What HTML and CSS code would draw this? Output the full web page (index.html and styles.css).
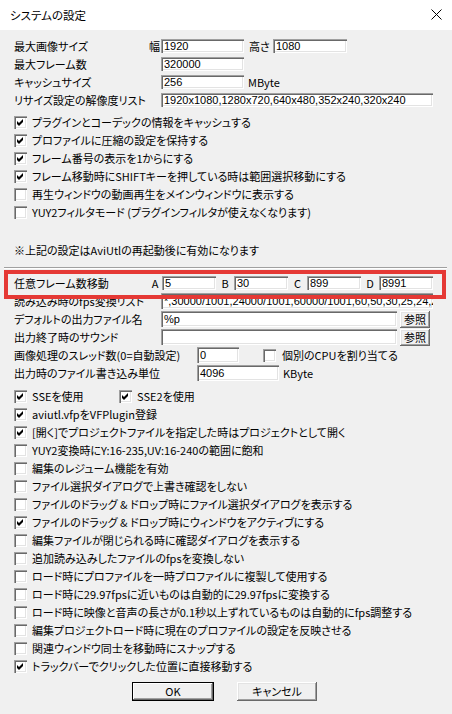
FILE: index.html
```html
<!DOCTYPE html>
<html lang="ja">
<head>
<meta charset="utf-8">
<title>システムの設定</title>
<link rel="stylesheet" href="styles.css">
</head>
<body>
<div class="window">
  <div class="titlebar">
    <span class="title">システムの設定</span>
    <svg class="close" width="11" height="11" viewBox="0 0 11 11"><path d="M0.5 0.5 L10.5 10.5 M10.5 0.5 L0.5 10.5" stroke="#000" stroke-width="1" fill="none"/></svg>
  </div>
  <div class="content">
    <div class="top">
      <div class="row"><span class="lbl l147 split">最大画像サイズ<span>幅</span></span><span class="edit e83">1920</span><span class="mid">高さ</span><span class="edit e74">1080</span></div>
      <div class="row"><span class="lbl l147">最大フレーム数</span><span class="edit e83">320000</span></div>
      <div class="row"><span class="lbl l147">キャッシュサイズ</span><span class="edit e83">256</span><span class="unit">MByte</span></div>
      <div class="row"><span class="lbl l147">リサイズ設定の解像度リスト</span><span class="edit e272">1920x1080,1280x720,640x480,352x240,320x240</span></div>
    </div>
    <div class="checks">
      <div class="row"><span class="box"><svg width="13" height="13" viewBox="0 0 13 13"><polygon points="3,5 5,7 9,3 9,6 5,10 3,8" fill="#000"/></svg></span><span>プラグインとコーデックの情報をキャッシュする</span></div>
      <div class="row"><span class="box"><svg width="13" height="13" viewBox="0 0 13 13"><polygon points="3,5 5,7 9,3 9,6 5,10 3,8" fill="#000"/></svg></span><span>プロファイルに圧縮の設定を保持する</span></div>
      <div class="row"><span class="box"><svg width="13" height="13" viewBox="0 0 13 13"><polygon points="3,5 5,7 9,3 9,6 5,10 3,8" fill="#000"/></svg></span><span>フレーム番号の表示を1からにする</span></div>
      <div class="row"><span class="box"><svg width="13" height="13" viewBox="0 0 13 13"><polygon points="3,5 5,7 9,3 9,6 5,10 3,8" fill="#000"/></svg></span><span>フレーム移動時にSHIFTキーを押している時は範囲選択移動にする</span></div>
      <div class="row"><span class="box"></span><span>再生ウィンドウの動画再生をメインウィンドウに表示する</span></div>
      <div class="row"><span class="box"></span><span>YUY2フィルタモード (プラグインフィルタが使えなくなります)</span></div>
    </div>
    <div class="row note">※上記の設定はAviUtlの再起動後に有効になります</div>
    <div class="separator"></div>
    <div class="lower">
      <div class="row"><span class="lbl l134">任意フレーム数移動</span><span class="key k14">A</span><span class="edit e54">5</span><span class="key k18">B</span><span class="edit e54">30</span><span class="key k19">C</span><span class="edit e54">899</span><span class="key k18">D</span><span class="edit e54">8991</span></div>
      <div class="row"><span class="lbl l147">読み込み時のfps変換リスト</span><span class="edit tall e272">*,30000/1001,24000/1001,60000/1001,60,50,30,25,24,20,15,12,10,8,6,5,4,3,2,1</span></div>
      <div class="row"><span class="lbl l147">デフォルトの出力ファイル名</span><span class="edit tall e236">%p</span><span class="btn ref">参照</span></div>
      <div class="row"><span class="lbl l147">出力終了時のサウンド</span><span class="edit tall e236"></span><span class="btn ref">参照</span></div>
      <div class="row"><span class="lbl l183">画像処理のスレッド数(0=自動設定)</span><span class="edit tall e42">0</span><span class="box cpu"></span><span>個別のCPUを割り当てる</span></div>
      <div class="row"><span class="lbl l183">出力時のファイル書き込み単位</span><span class="edit tall e82">4096</span><span class="unit">KByte</span></div>
    </div>
    <div class="checks2">
      <div class="row"><span class="group"><span class="box"><svg width="13" height="13" viewBox="0 0 13 13"><polygon points="3,5 5,7 9,3 9,6 5,10 3,8" fill="#000"/></svg></span><span>SSEを使用</span></span><span class="box"><svg width="13" height="13" viewBox="0 0 13 13"><polygon points="3,5 5,7 9,3 9,6 5,10 3,8" fill="#000"/></svg></span><span>SSE2を使用</span></div>
      <div class="row"><span class="box"><svg width="13" height="13" viewBox="0 0 13 13"><polygon points="3,5 5,7 9,3 9,6 5,10 3,8" fill="#000"/></svg></span><span>aviutl.vfpをVFPlugin登録</span></div>
      <div class="row"><span class="box"><svg width="13" height="13" viewBox="0 0 13 13"><polygon points="3,5 5,7 9,3 9,6 5,10 3,8" fill="#000"/></svg></span><span>[開く]でプロジェクトファイルを指定した時はプロジェクトとして開く</span></div>
      <div class="row"><span class="box"></span><span>YUY2変換時にY:16-235,UV:16-240の範囲に飽和</span></div>
      <div class="row"><span class="box"></span><span>編集のレジューム機能を有効</span></div>
      <div class="row"><span class="box"></span><span>ファイル選択ダイアログで上書き確認をしない</span></div>
      <div class="row"><span class="box"></span><span>ファイルのドラッグ &amp; ドロップ時にファイル選択ダイアログを表示する</span></div>
      <div class="row"><span class="box"><svg width="13" height="13" viewBox="0 0 13 13"><polygon points="3,5 5,7 9,3 9,6 5,10 3,8" fill="#000"/></svg></span><span>ファイルのドラッグ &amp; ドロップ時にウィンドウをアクティブにする</span></div>
      <div class="row"><span class="box"></span><span>編集ファイルが閉じられる時に確認ダイアログを表示する</span></div>
      <div class="row"><span class="box"></span><span>追加読み込みしたファイルのfpsを変換しない</span></div>
      <div class="row"><span class="box"></span><span>ロード時にプロファイルを一時プロファイルに複製して使用する</span></div>
      <div class="row"><span class="box"></span><span>ロード時に29.97fpsに近いものは自動的に29.97fpsに変換する</span></div>
      <div class="row"><span class="box"></span><span>ロード時に映像と音声の長さが0.1秒以上ずれているものは自動的にfps調整する</span></div>
      <div class="row"><span class="box"></span><span>編集プロジェクトロード時に現在のプロファイルの設定を反映させる</span></div>
      <div class="row"><span class="box"></span><span>関連ウィンドウ同士を移動時にスナップする</span></div>
      <div class="row"><span class="box"><svg width="13" height="13" viewBox="0 0 13 13"><polygon points="3,5 5,7 9,3 9,6 5,10 3,8" fill="#000"/></svg></span><span>トラックバーでクリックした位置に直接移動する</span></div>
    </div>
    <div class="buttons">
      <span class="btn ok">OK</span>
      <span class="btn cancel">キャンセル</span>
    </div>
  </div>
  <div class="highlight"></div>
</div>
</body>
</html>
```
FILE: styles.css
```css
html, body {
  margin: 0;
  padding: 0;
}
body {
  width: 452px;
  height: 714px;
  overflow: hidden;
  background: #f0f0f0;
  font-family: "Noto Sans CJK JP", sans-serif;
  font-size: 11px;
  font-feature-settings: "palt";
  color: #000;
}
.window {
  position: relative;
  width: 452px;
  height: 714px;
}
.titlebar {
  height: 30px;
  background: #fff;
  display: flex;
  align-items: center;
  justify-content: space-between;
  padding: 0 10px 0 10px;
  box-sizing: border-box;
}
.title {
  line-height: 30px;
  font-size: 11.5px;
}
.close {
  display: block;
  margin-top: -1px;
}
.content {
  padding: 0 0 0 14px;
}
.row {
  display: flex;
  align-items: center;
  height: 18px;
  line-height: 18px;
  white-space: nowrap;
}
.top {
  padding-top: 7px;
}
.checks {
  margin-top: 4px;
}
.lbl {
  display: block;
  box-sizing: border-box;
  flex: none;
}
.split {
  display: flex;
  justify-content: space-between;
  padding-right: 1px;
}
.l147 { width: 147px; }
.l134 { width: 134px; }
.l183 { width: 183px; }
.edit {
  display: block;
  flex: none;
  box-sizing: border-box;
  height: 14px;
  line-height: 14px;
  background: #fff;
  box-shadow: inset 1px 1px #a0a0a0, inset 2px 2px #696969, inset -1px -1px #fff, inset -2px -2px #e3e3e3;
  padding-left: 3px;
  overflow: hidden;
  white-space: nowrap;
  font-family: "Liberation Sans", "Noto Sans CJK JP", sans-serif;
  font-size: 11px;
}
.edit.tall {
  height: 16px;
  line-height: 16px;
}
.e83 { width: 83px; }
.e74 { width: 74px; }
.e272 { width: 272px; }
.e54 { width: 54px; }
.e236 { width: 236px; }
.e42 { width: 42px; }
.e82 { width: 82px; }
.mid {
  width: 29px;
  padding-left: 5px;
  box-sizing: border-box;
  flex: none;
}
.unit {
  margin-left: 4px;
}
.key {
  flex: none;
  text-align: center;
}
.k14 { width: 14px; }
.k18 { width: 18px; }
.k19 { width: 19px; }
.box {
  display: block;
  flex: none;
  width: 13px;
  height: 13px;
  background: #fff;
  box-shadow: inset 1px 1px #a0a0a0, inset 2px 2px #696969, inset -1px -1px #fff, inset -2px -2px #e3e3e3;
  margin-right: 5px;
}
.box svg {
  display: block;
}
.box.cpu {
  margin-left: 24px;
  margin-right: 6px;
}
.group {
  display: flex;
  align-items: center;
  width: 105px;
  flex: none;
}
.note {
  margin-top: 20px;
}
.separator {
  margin: 8px 5px 0 -10px;
  height: 0;
  border-top: 1px solid #a0a0a0;
  border-bottom: 1px solid #fff;
}
.lower {
  margin-top: 5px;
}
.checks2 {
  margin-top: 5px;
}
.btn {
  display: flex;
  align-items: center;
  justify-content: center;
  box-sizing: border-box;
  background: #f0f0f0;
  flex: none;
}
.ref {
  width: 30px;
  height: 17px;
  margin-left: 3px;
  line-height: 17px;
  box-shadow: inset -1px -1px #696969, inset 1px 1px #fff, inset -2px -2px #a0a0a0, inset 2px 2px #e3e3e3;
}
.buttons {
  display: flex;
  gap: 23px;
  margin-top: 7px;
  padding-left: 118px;
}
.ok, .cancel {
  height: 19px;
  line-height: 19px;
}
.ok {
  width: 82px;
  box-shadow: inset 0 0 0 1px #000, inset -2px -2px #696969, inset 2px 2px #fff, inset -3px -3px #a0a0a0;
}
.cancel {
  width: 80px;
  box-shadow: inset -1px -1px #696969, inset 1px 1px #fff, inset -2px -2px #a0a0a0, inset 2px 2px #e3e3e3;
}
.highlight {
  position: absolute;
  left: 4px;
  top: 270px;
  width: 442px;
  height: 29px;
  box-sizing: border-box;
  border: 4px solid #e53935;
}
```
